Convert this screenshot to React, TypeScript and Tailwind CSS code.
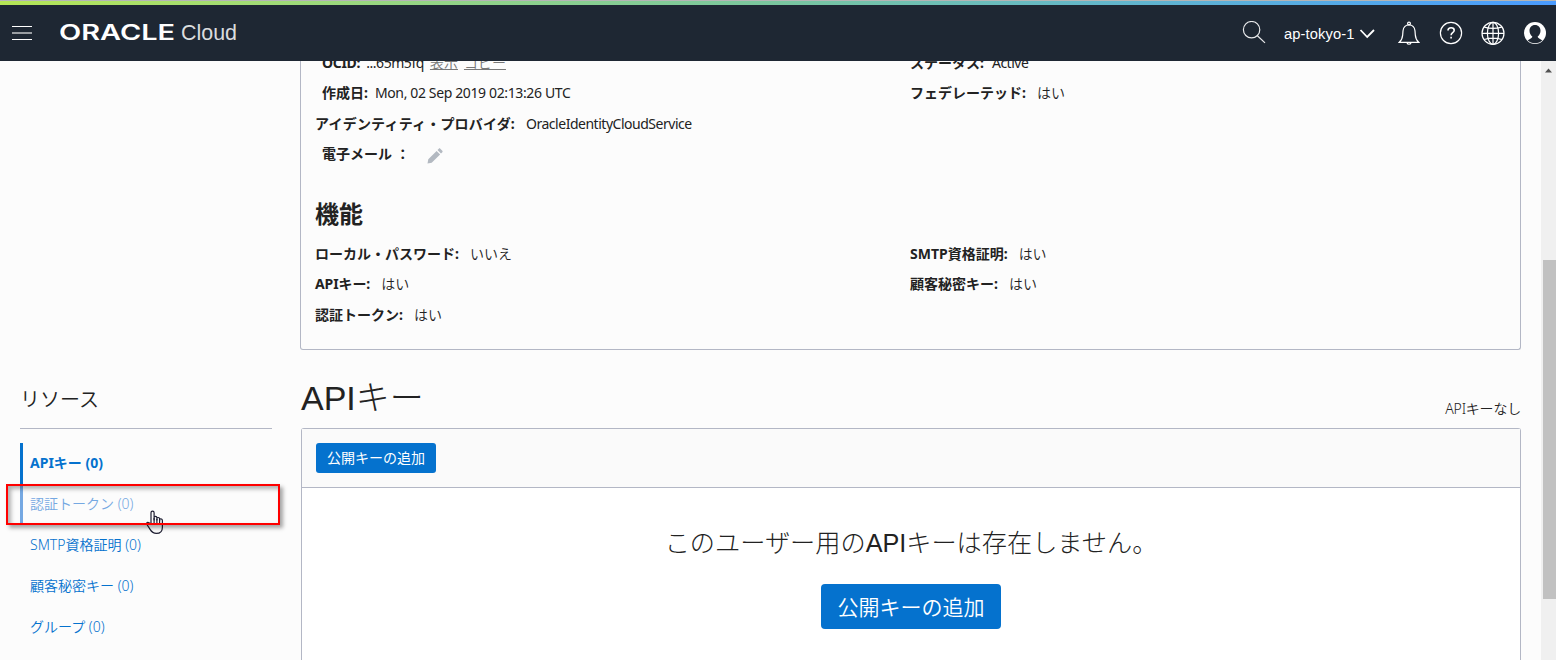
import type { ReactNode } from "react";

const sans = "font-['Noto_Sans','Noto_Sans_CJK_JP',sans-serif]";
const arial = "font-['Liberation_Sans','Noto_Sans_CJK_JP',sans-serif]";

type FieldProps = { label: string; children?: ReactNode; className?: string; gap?: string; labelClass?: string; valueClass?: string };

function Field({ label, children, className = "", gap = "gap-[11px]", labelClass = "", valueClass = "font-[350]" }: FieldProps) {
  return (
    <div className={`flex items-center whitespace-nowrap text-[14px] leading-[30px] ${gap} ${className}`}>
      <span className={`font-bold ${labelClass}`}>{label}</span>
      <span className={`flex items-center ${valueClass}`}>{children}</span>
    </div>
  );
}

function Header() {
  return (
    <header className="relative z-10 flex h-[61px] shrink-0 flex-col">
      <div className="h-px bg-[#b5b5b5]" />
      <div className="h-1 bg-linear-to-r from-[#b5e655] via-[#79c69f] to-[#4a9bff]" />
      <div className="flex h-14 items-center bg-[#1e2733] text-white">
        <div className="ml-3 flex w-5 flex-col gap-[5px]">
          <i className="h-px bg-white" />
          <i className="h-[2px] bg-[#999da2]" />
          <i className="h-px bg-white" />
        </div>
        <svg className="ml-7 h-6 w-[180px]" viewBox="0 0 180 24" fill="white">
          <text x="-1" y="19" fontFamily="Inter" fontWeight="600" fontSize="21" textLength="116" lengthAdjust="spacingAndGlyphs">ORACLE</text>
          <text x="121" y="19" fontFamily="Liberation Sans" fontSize="21.5" textLength="56" lengthAdjust="spacingAndGlyphs" fillOpacity="0.85">Cloud</text>
        </svg>
        <svg className="ml-auto h-6 w-6" viewBox="0 0 24 24" fill="none" stroke="#e8e9eb" strokeWidth="1.2">
          <circle cx="9.6" cy="8.700" r="8.2" />
          <path d="M15.400 14.700 23 21.900" />
        </svg>
        <div className="ml-[18px] flex w-[91px] items-center justify-between">
          <span className="mt-[2px] whitespace-nowrap font-['Liberation_Sans',sans-serif] text-[14.7px] leading-5 tracking-[0.12px]">ap-tokyo-1</span>
          <svg className="mt-[2px] h-4 w-4" viewBox="0 0 16 16" fill="none" stroke="white" strokeWidth="1.8">
            <path d="m1.500 4 6.700 7L15 4" />
          </svg>
        </div>
        <svg className="ml-[23px] h-6 w-[22px]" viewBox="0 0 22 24" fill="none" stroke="white" strokeWidth="1.2">
          <circle cx="11" cy="2.500" r="1.4" />
          <path d="M1.300 21.300c2-1.800 3.200-4 3.400-7.400l.3-4C5.300 6.100 7.900 3.800 11 3.800s5.700 2.300 6 6.100l.3 4c.2 3.400 1.400 5.600 3.400 7.400z" />
          <path d="M9 21.800a2.100 2.100 0 0 0 4 0" />
        </svg>
        <svg className="ml-[19px] h-6 w-6" viewBox="0 0 24 24" fill="none" stroke="white" strokeWidth="1.2">
          <circle cx="12" cy="12" r="10.6" />
          <path d="M9 9.600c0-4 6.200-3.600 6.200-.4 0 2.500-3.100 2.500-3.100 5" strokeWidth="1.600" />
          <path d="M12.100 15.800v1.700" strokeWidth="1.600" />
        </svg>
        <svg className="ml-[18px] h-6 w-6" viewBox="0 0 24 24" fill="none" stroke="white" strokeWidth="1.2">
          <circle cx="12" cy="12.300" r="11" />
          <ellipse cx="12" cy="12.300" rx="5.600" ry="11" />
          <path d="M12 1.300v22M1 12.300h22M3.300 6.100c5 1.500 12.400 1.500 17.400 0M3.300 18.500c5-1.500 12.400-1.500 17.400 0" />
        </svg>
        <svg className="ml-[18px] mr-[9px] h-6 w-6" viewBox="0 0 24 24">
          <circle cx="12" cy="12" r="11" fill="white" />
          <path d="M12 4c-3.500 0-5.500 2.500-5.500 5.700 0 2.500 1.200 4.500 2.800 5.700.3 1.600-2.900 2.500-4.700 3.900 1.800 1.800 4.400 3 7.400 3s5.600-1.200 7.400-3c-1.800-1.400-5-2.300-4.700-3.900 1.600-1.200 2.800-3.200 2.800-5.700C17.500 6.500 15.500 4 12 4z" fill="#1e2733" />
        </svg>
      </div>
    </header>
  );
}

function Sidebar() {
  return (
    <aside className="relative ml-5 flex w-[252px] shrink-0 flex-col pt-[319px]">
      <h2 className="h-[49px] border-b border-[#b3b7c5] text-[20px] leading-[40px] font-[350]">リソース</h2>
      <nav className="mt-[14px] flex flex-col whitespace-nowrap text-[14px] leading-[39px] text-[#0572ce]">
        <a className="h-[41px] border-l-3 border-[#0572ce] pl-[7px] font-bold">APIキー (0)</a>
        <a className="h-[41px] border-l-3 border-[#75a8e2] pl-[7px] font-[350] text-[#75a8e2]">認証トークン (0)</a>
        <a className="h-[41px] pl-[10px] font-[350]">SMTP資格証明 (0)</a>
        <a className="h-[41px] pl-[10px] font-[350]">顧客秘密キー (0)</a>
        <a className="h-[41px] pl-[10px] font-[350]">グループ (0)</a>
      </nav>
      <svg className="absolute top-[448px] left-[125px] h-[26px] w-5" viewBox="0 0 20 26" fill="#fcfcfc" stroke="#1e1e32" strokeWidth="1.200" strokeLinejoin="round">
        <path d="M6 15V3.800c0-2.200 3.100-2.200 3.100 0V11 8.500c0-1.500 2.800-1.400 2.800.2V11 9.500c0-1.500 2.700-1.300 2.700.3v1.800-.8c0-1.400 2.800-1.200 2.800.6v6.800c0 3.300-1.900 6.200-6 6.200-3.300 0-4.700-1.300-6.300-4l-3.300-5.200c-.8-1.500 1-2.500 2.200-1.300z" />
        <path d="M9.100 9v5M11.900 10v4M14.600 11v3" fill="none" />
      </svg>
      <div className="absolute top-[423px] left-[-14px] h-[41px] w-[274px] border-2 border-[#ff0000] shadow-[3px_3px_4px_rgba(0,0,0,0.35),inset_3px_3px_4px_rgba(0,0,0,0.3)]" />
    </aside>
  );
}

function Details() {
  return (
    <section className="h-[289px] overflow-hidden rounded-b-[3px] border border-t-0 border-[#b3b7c5] px-[14px]">
      <div className="-mt-[13px] grid grid-cols-[595px_1fr] auto-rows-[30.3px]">
        <Field label="OCID:" className="pl-[7px]" gap="gap-[6px]" labelClass="tracking-[-0.3px]" valueClass="gap-[6px] tracking-[-0.45px]">
          ...65m5fq <a className="font-[350] text-[#777] underline tracking-normal">表示</a> <a className="font-[350] text-[#777] underline tracking-normal">コピー</a>
        </Field>
        <Field label="ステータス:" gap="gap-[8px]" valueClass="tracking-[-0.5px]">Active</Field>
        <Field label="作成日:" className="pl-[7px]" gap="gap-[7px]" valueClass="tracking-[-0.37px]">Mon, 02 Sep 2019 02:13:26 UTC</Field>
        <Field label="フェデレーテッド:">はい</Field>
        <Field label="アイデンティティ・プロバイダ:" className="col-span-2" labelClass="tracking-[0.2px]" valueClass="tracking-[-0.48px]">OracleIdentityCloudService</Field>
        <Field label="電子メール ：" className="col-span-2 pl-[7px]" gap="gap-[17px]">
          <svg className="mt-1 h-4 w-4" viewBox="0 0 16 16" fill="#b3b9c1">
            <path d="M11.800.7c.5-.5 1-.5 1.500 0l2 2c.5.5.5 1 0 1.500l-1.300 1.300-3.500-3.500zM9.600 2.900l3.500 3.500-8.400 8.400L.5 15.600l.8-4.300z" />
          </svg>
        </Field>
      </div>
      <h2 className="mt-[25.400px] h-[44px] text-[24px] leading-[38px] font-bold">機能</h2>
      <div className="grid grid-cols-[595px_1fr] auto-rows-[30.4px]">
        <Field label="ローカル・パスワード:">いいえ</Field>
        <Field label="SMTP資格証明:">はい</Field>
        <Field label="APIキー:" labelClass="tracking-[-0.1px]">はい</Field>
        <Field label="顧客秘密キー:">はい</Field>
        <Field label="認証トークン:">はい</Field>
      </div>
    </section>
  );
}

function ApiKeys() {
  return (
    <section className="ml-px flex grow flex-col">
      <div className="flex h-[78px] items-end justify-between whitespace-nowrap">
        <h1 className={`pb-[3px] text-[34px] leading-[54px] font-light ${arial}`}>APIキー</h1>
        <span className="pb-[7px] text-[14px] leading-6 font-[350] tracking-[-0.2px]">APIキーなし</span>
      </div>
      <div className="flex grow flex-col rounded-t-[3px] border border-b-0 border-[#b3b7c5] bg-white">
        <div className="h-[59px] border-b border-[#b3b7c5] bg-[#fafafa] pt-[14px] pl-[14px]">
          <button className="flex h-[30px] w-[120px] items-center justify-center rounded-[3px] bg-[#0572ce] text-[14px] leading-none text-white">公開キーの追加</button>
        </div>
        <div className="flex flex-col items-center whitespace-nowrap">
          <p className={`mt-[35px] h-[61px] text-[25.2px] leading-[40px] font-light ${arial}`}>このユーザー用のAPIキーは存在しません。</p>
          <button className="flex h-[45px] w-[180px] items-center justify-center rounded-[4px] bg-[#0572ce] pt-[2px] text-[21px] leading-none font-[350] text-white">公開キーの追加</button>
        </div>
      </div>
    </section>
  );
}

export default function App() {
  return (
    <div className={`flex h-[660px] w-[1556px] flex-col overflow-hidden bg-[#fcfcfc] text-[#222] ${sans}`}>
      <Header />
      <div className="flex h-[599px]">
        <Sidebar />
        <main className="ml-7 flex w-[1221px] shrink-0 flex-col">
          <Details />
          <ApiKeys />
        </main>
        <div className="ml-5 flex w-[15px] flex-col items-end bg-[#f0f0f0]">
          <svg className="mt-[7px] mr-1 h-[5px] w-[7px]" viewBox="0 0 7 5" fill="#505050">
            <path d="M0 4.500 3.500.5 7 4.500z" />
          </svg>
          <div className="mt-[187px] h-[339px] w-[13px] bg-[#c1c1c1]" />
        </div>
      </div>
    </div>
  );
}
